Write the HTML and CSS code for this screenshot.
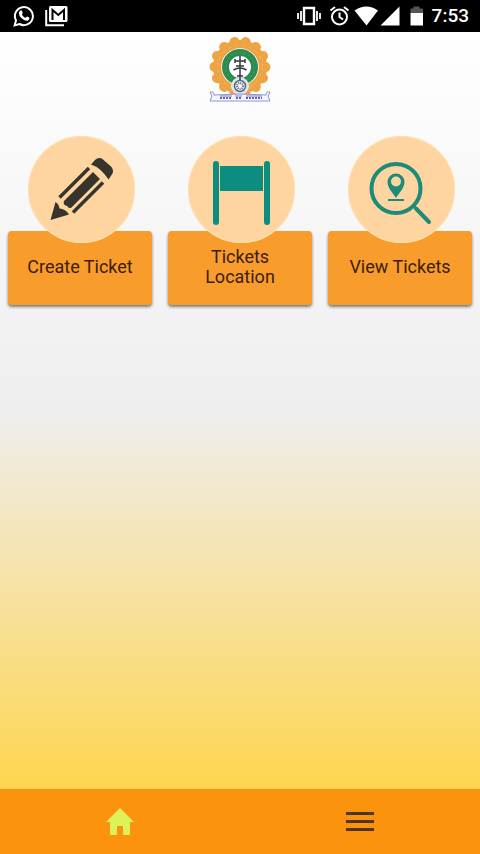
FILE: index.html
```html
<!DOCTYPE html>
<html lang="en">
<head>
<meta charset="utf-8">
<meta name="viewport" content="width=device-width, initial-scale=1">
<title>Tickets</title>
<link rel="stylesheet" href="styles.css">
</head>
<body>
<header class="status">
  <div class="status-group">
    <svg width="22" height="22" viewBox="0 0 22 22" aria-hidden="true"><path d="M1.6 20.4 3 15.4A9 9 0 1 1 6.6 19Z" fill="none" stroke="#fff" stroke-width="2"/><path d="M7.2 5.8c.7-.7 1.5-.5 1.8.2l.7 1.7c.2.6-.8 1.4-.8 1.7.7 1.6 2 2.7 3.7 3.4.5 0 1.1-1.4 1.6-1.2l2 1c.7.4-.1 2.3-1.1 2.8-1.5.7-3.8.1-5.9-1.6-2-1.7-3.2-3.7-3.2-5.4 0-1.200.5-2 1.200-2.600z" fill="#fff"/></svg>
    <svg width="24" height="22" viewBox="0 0 24 22" aria-hidden="true"><path d="M1.200 5v15.200H19" fill="none" stroke="#fff" stroke-width="2"/><rect x="4" y="1" width="18.500" height="16" rx="1.500" fill="#fff"/><path d="M7.500 15V5l5.800 5L19 5v10" fill="none" stroke="#000" stroke-width="2"/></svg>
  </div>
  <div class="status-system">
    <svg width="27" height="24" viewBox="0 0 27 24" aria-hidden="true"><path d="M7 4h10v16H7z" fill="none" stroke="#fff" stroke-width="2.400"/><path d="M1 9v6M4 7v10M20 7v10M23 9v6" stroke="#fff" stroke-width="1.800"/></svg>
    <svg width="27" height="24" viewBox="0 0 27 24" aria-hidden="true"><circle cx="15.500" cy="13" r="7.500" fill="none" stroke="#fff" stroke-width="2"/><path d="M15.500 8.500V13l3.500 2.500M6.500 6.500 11 3M20 3l4.500 3.500" fill="none" stroke="#fff" stroke-width="2"/></svg>
    <svg width="27" height="24" viewBox="0 0 27 24" aria-hidden="true"><path d="M3.500 6.500Q15.500-1.500 27 6.500L15.500 21.500Z" fill="#fff"/></svg>
    <svg width="27" height="24" viewBox="0 0 27 24" aria-hidden="true"><path d="M21.500 2.500v19H2.500Z" fill="#fff"/></svg>
    <svg width="27" height="24" viewBox="0 0 27 24" aria-hidden="true"><path d="M5.500 9V4.500h3v-2h6v2h3.500V9Z" fill="#555"/><path d="M5.500 9H18v12.500H5.500Z" fill="#fff"/></svg>
    <time class="clock">7:53</time>
  </div>
</header>

<main class="home">
  <div class="brand">
    <svg width="64" height="68" viewBox="0 0 64 68" role="img" aria-label="Emblem">
      <g fill="none" stroke="#eea443">
        <circle cx="32" cy="31" r="22.500" stroke-width="9"/>
        <circle cx="32" cy="31" r="25.500" stroke-width="10" stroke-linecap="round" pathLength="140" stroke-dasharray=".1 9.900"/>
      </g>
      <circle cx="32" cy="31" r="22" fill="none" stroke="#f3b566" stroke-width="1" stroke-dasharray="3 4"/>
      <circle cx="32" cy="31" r="18.800" fill="#fff"/>
      <circle cx="32" cy="31" r="14.500" fill="none" stroke="#2c8b4e" stroke-width="7"/>
      <circle cx="32" cy="31" r="14.500" fill="none" stroke="#45986a" stroke-width="1.500" stroke-dasharray="1.500 3"/>
      <circle cx="32" cy="50" r="9" fill="#e2e5eb"/>
      <path d="M32 20v26M26.500 25h11M28 30h8M25.500 34q6.500-4 13 0M29 40h6M27 23v4M37 23v4" fill="none" stroke="#333842" stroke-width="1.500"/>
      <circle cx="32" cy="50" r="5.500" fill="#f5f6fa" stroke="#59647e" stroke-width="1.500"/>
      <circle cx="32" cy="50" r="3" fill="none" stroke="#59647e" stroke-width="2" stroke-dasharray="1 1"/>
      <path d="M2 56q4-1 4 3 26-2 52 0 0-4 4-3l-2 4 2 5H2l2-5Z" fill="#f5f5ff" stroke="#8f93d0" stroke-width="1"/>
      <path d="M12 60h12M27 60h7M38 60h16" stroke="#777cc4" stroke-width="1"/>
      <path d="M12 62h12M28 62h5M38 62h16" stroke="#5d64b6" stroke-width="2" stroke-dasharray="2 1"/>
    </svg>
  </div>
  <nav class="tiles" aria-label="Tickets">
    <button class="tile" type="button">
      <span class="tile-icon">
        <svg viewBox="0 0 107 107" aria-hidden="true"><g fill="#35352c"><path d="M22.500 84 27.500 66Q31 68 31.500 72.500 37.500 73 41 78.500Z"/><path d="M63 28.500 67 24Q71 20.500 75 23.500L83 30.500Q86 34 84.500 37.500L80.500 43.500Q77 38 72.500 34 68 30 63 28.500Z"/><path d="M65 36 72 43 43.500 71.500Q41 73 39 70 34.500 69 36 65Z"/></g><path d="M61 32 31.500 61.500M75 46.500 45 76.500" stroke="#35352c" stroke-width="3.500"/></svg>
      </span>
      <span class="tile-label">Create Ticket</span>
    </button>
    <button class="tile" type="button">
      <span class="tile-icon">
        <svg viewBox="0 0 107 107" aria-hidden="true"><g fill="#0d8c80"><rect x="25" y="25" width="6" height="64" rx="3"/><rect x="76" y="25" width="6" height="64" rx="3"/><rect x="32" y="30" width="43" height="25"/></g></svg>
      </span>
      <span class="tile-label">Tickets Location</span>
    </button>
    <button class="tile" type="button">
      <span class="tile-icon">
        <svg viewBox="0 0 107 107" aria-hidden="true"><g fill="none" stroke="#1e8a78"><circle cx="48" cy="52.500" r="24.500" stroke-width="4"/><path d="m65 69.500 3 3" stroke-width="3"/><path d="m68 72.500 13 13.500" stroke-width="4" stroke-linecap="round"/><path d="M40 64h16" stroke-width="2"/></g><path fill-rule="evenodd" fill="#1e8a78" d="M48 62c-3-5-8.500-10-8.500-16a8.500 8.500 0 0 1 17 0c0 6-5.500 11-8.500 16Zm0-21.500a5 5 0 1 0 0 10 5 5 0 0 0 0-10Z"/></svg>
      </span>
      <span class="tile-label">View Tickets</span>
    </button>
  </nav>
</main>

<nav class="tabbar" aria-label="Main">
  <a class="tab" href="#home" aria-label="Home"><svg width="28" height="28" viewBox="0 0 28 28" aria-hidden="true"><path d="M14 0 0 14h4v13h7v-9h6v9h7V14h4Z" fill="#dff15a"/></svg></a>
  <a class="tab" href="#menu" aria-label="Menu"><svg width="28" height="28" viewBox="0 0 28 28" aria-hidden="true"><path d="M0 5.500h28M0 13.500h28M0 21.500h28" stroke="#503714" stroke-width="3"/></svg></a>
</nav>
</body>
</html>
```

FILE: styles.css
```css
* {
  box-sizing: border-box;
}

body {
  display: flex;
  flex-direction: column;
  min-height: 100vh;
  margin: 0;
  font-family: Roboto, "Liberation Sans", sans-serif;
}

svg {
  display: block;
}

.status {
  display: flex;
  align-items: center;
  justify-content: space-between;
  height: 32px;
  padding: 0 11px 0 13px;
  background: #000;
  color: #fff;
}

.status-group {
  display: flex;
  gap: 10px;
}

.status-system {
  display: flex;
  align-items: center;
}

.clock {
  font-size: 19px;
  font-weight: 500;
  line-height: 24px;
}

.home {
  flex: 1;
  background: linear-gradient(#fff, #eee 50%, #ffd54f);
}

.brand {
  display: flex;
  justify-content: center;
  padding: 4px 0 32px;
}

.tiles {
  display: grid;
  grid-template-columns: repeat(3, 1fr);
  gap: 16px;
  padding: 0 8px;
}

.tile {
  display: flex;
  flex-direction: column;
  align-items: center;
  padding: 0;
  border: 0;
  background: none;
  color: #3c1c0c;
  font: inherit;
  cursor: pointer;
}

.tile-icon {
  z-index: 1;
  width: 107px;
  height: 107px;
  margin: 0 0 -12px 3px;
  border-radius: 50%;
  background: #fed5a0;
  box-shadow: inset 0 0 0 1px #ffe0b2;
}

.tile-label {
  display: flex;
  align-items: center;
  justify-content: center;
  width: 100%;
  min-height: 74px;
  padding: 0 16px 3px;
  border-radius: 4px;
  background: #f89d2c;
  box-shadow: 0 2px 3px rgba(0, 0, 0, 0.5);
  font-size: 18px;
  line-height: 20px;
}

.tabbar {
  display: flex;
  height: 65px;
  background: #fc930e;
}

.tab {
  display: flex;
  flex: 1;
  align-items: center;
  justify-content: center;
}
```
